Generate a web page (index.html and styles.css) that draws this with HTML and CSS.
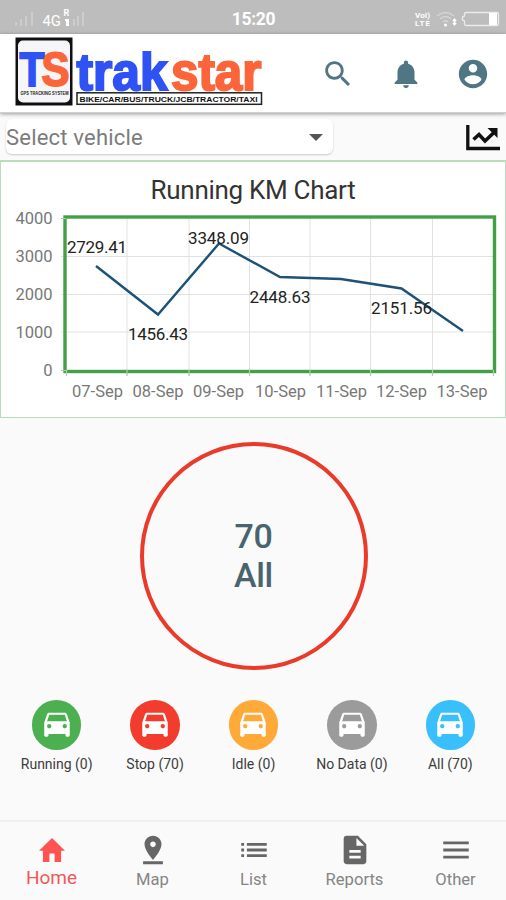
FILE: index.html
```html
<!DOCTYPE html>
<html lang="en">
<head>
<meta charset="utf-8">
<title>Trakstar</title>
<link rel="stylesheet" href="styles.css">
</head>
<body>
<div class="app">
  <div class="status">
    <svg class="status-left" viewBox="0 0 100 34">
      <g fill="#cdcdcd"><path d="M15 21h2v4h-2zM20 18h2v7h-2zM25 15h2v10h-2zM31 11h2v14h-2zM73 18h2v7h-2zM77 15h2v10h-2zM82 11h2v14h-2z"/></g>
      <text class="net" x="42.500" y="25" textLength="18.500" lengthAdjust="spacingAndGlyphs">4G</text>
      <text class="roam" x="63.500" y="15">R</text>
      <path d="M65 18h4v7h-3v-5h-1z" fill="#fff"/>
    </svg>
    <span class="clock">15:20</span>
    <svg class="status-right" viewBox="406 0 100 34">
      <text class="lte" x="415" y="17" textLength="15" lengthAdjust="spacingAndGlyphs">VoI)</text>
      <text class="lte" x="415" y="25" textLength="15">LTE</text>
      <g fill="none" stroke="#d6d6d6" stroke-width="1.300"><path d="M437 15q8.500-7 17 0M440 18q5.500-5 11 0M443 21q2.500-2.500 5 0"/></g>
      <circle cx="445.500" cy="24" r="1.500" fill="#fff"/>
      <path d="M454.500 17l2.300 3h-1.300v2h1.300l-2.300 3-2.300-3h1.300v-2h-1.300z" fill="#fff"/>
      <path d="M466 11.500h31a1.500 1.500 0 0 1 1.500 1.500v10a1.500 1.500 0 0 1-1.500 1.500h-31a1.500 1.500 0 0 1-1.500-1.500v-3l-2-1v-3l2-1v-2a1.500 1.500 0 0 1 1.500-1.500z" fill="none" stroke="#ececec" stroke-width="1.300"/>
      <path d="M489 12h8v12h-8z" fill="#fff"/>
    </svg>
  </div>

  <header class="header">
    <svg class="logo" viewBox="14 34 250 79">
      <rect x="15.500" y="37.500" width="57" height="68" fill="#101010"/>
      <rect x="18" y="40.500" width="52" height="62" rx="5" fill="#f6f6f8"/>
      <text class="mark blue" x="19.500" y="86" textLength="25" lengthAdjust="spacingAndGlyphs">T</text>
      <text class="mark orange" x="41.500" y="86" textLength="28" lengthAdjust="spacingAndGlyphs">S</text>
      <text class="micro" x="20.500" y="95" textLength="48" lengthAdjust="spacingAndGlyphs">GPS TRACKING SYSTEM</text>
      <text class="word blue" x="76.500" y="89.500" textLength="91" lengthAdjust="spacingAndGlyphs">trak</text>
      <text class="word orange" x="171" y="89.500" textLength="90.500" lengthAdjust="spacingAndGlyphs">star</text>
      <rect x="77" y="92.800" width="184.500" height="11.500" fill="#fff" stroke="#222" stroke-width="1.500"/>
      <text class="tag" x="79.500" y="102" textLength="178" lengthAdjust="spacingAndGlyphs">BIKE/CAR/BUS/TRUCK/JCB/TRACTOR/TAXI</text>
    </svg>
    <nav class="actions">
      <svg class="icon" viewBox="0 0 24 24"><path d="M15.500 14h-.79l-.28-.27C15.410 12.590 16 11.110 16 9.500 16 5.910 13.090 3 9.500 3S3 5.910 3 9.500 5.910 16 9.500 16c1.610 0 3.090-.59 4.230-1.570l.27.28v.79l5 4.990L20.490 19l-4.990-5zm-6 0C7.010 14 5 11.990 5 9.500S7.010 5 9.500 5 14 7.010 14 9.500 11.990 14 9.500 14z"/></svg>
      <svg class="icon" viewBox="0 0 24 24"><path d="M12 22c1.100 0 2-.9 2-2h-4c0 1.100.89 2 2 2zm6-6v-5c0-3.070-1.640-5.640-4.500-6.320V4c0-.83-.67-1.500-1.500-1.500s-1.500.67-1.500 1.500v.68C7.630 5.360 6 7.920 6 11v5l-2 2v1h16v-1l-2-2z"/></svg>
      <svg class="icon" viewBox="0 0 24 24"><path d="M12 2C6.480 2 2 6.480 2 12s4.480 10 10 10 10-4.480 10-10S17.520 2 12 2zm0 3c1.660 0 3 1.340 3 3s-1.340 3-3 3-3-1.340-3-3 1.340-3 3-3zm0 14.200c-2.500 0-4.710-1.280-6-3.220.03-1.990 4-3.080 6-3.080 1.990 0 5.970 1.090 6 3.080-1.290 1.940-3.500 3.220-6 3.220z"/></svg>
    </nav>
  </header>

  <div class="filter">
    <div class="select"><span>Select vehicle</span><i class="caret"></i></div>
    <svg class="trend" viewBox="0 0 34 27"><path d="M1.800 0v23.500H34" fill="none" stroke="#111" stroke-width="3.300"/><path d="M7.500 14.500l5.500-5 6 6.500 9-8.500" fill="none" stroke="#111" stroke-width="3.600"/><path d="M21.500 3h10v10z" fill="#111"/></svg>
  </div>

  <section class="chart">
    <h1 class="chart-title"><span>Running KM Chart</span></h1>
    <svg class="plot" viewBox="1 203 504 214">
      <path class="grid" d="M127 218v158M189 218v158M249.500 218v158M310 218v158M370.500 218v158M432.500 218v158M61 256.500h433M61 294.500h433M61 332h433"/>
      <rect x="65" y="217" width="429.500" height="154.500" fill="none" stroke="#43a047" stroke-width="3.400"/>
      <path class="tick" d="M61 218.500h5M61 370.500h5M66.500 370v6M127 370v6M189 370v6M249.500 370v6M310 370v6M370.500 370v6M432.500 370v6M493.500 370v6"/>
      <g class="axis end">
        <text x="52.500" y="224">4000</text><text x="52.500" y="262">3000</text><text x="52.500" y="300">2000</text><text x="52.500" y="338">1000</text><text x="52.500" y="376">0</text>
      </g>
      <g class="axis mid">
        <text x="97.500" y="397">07-Sep</text><text x="158" y="397">08-Sep</text><text x="218.500" y="397">09-Sep</text><text x="280.500" y="397">10-Sep</text><text x="341.500" y="397">11-Sep</text><text x="401.500" y="397">12-Sep</text><text x="462" y="397">13-Sep</text>
      </g>
      <polyline points="96,266 158,314.500 219,243.500 280,277 341,279 401.500,288.500 463,331" fill="none" stroke="#1b5276" stroke-width="2.400"/>
      <g class="value">
        <text x="67" y="253" textLength="60">2729.41</text><text x="128" y="340" textLength="60">1456.43</text><text x="188" y="243.500" textLength="61">3348.09</text><text x="249.500" y="303" textLength="61">2448.63</text><text x="371" y="314" textLength="61">2151.56</text>
      </g>
    </svg>
  </section>

  <main class="summary">
    <div class="gauge"><span>70</span><span>All</span></div>
    <div class="states">
      <div class="state"><div class="dot green"><svg class="icon car" viewBox="0 0 24 24"><use href="#car"/></svg></div><span>Running (0)</span></div>
      <div class="state"><div class="dot red"><svg class="icon car" viewBox="0 0 24 24"><use href="#car"/></svg></div><span>Stop (70)</span></div>
      <div class="state"><div class="dot amber"><svg class="icon car" viewBox="0 0 24 24"><use href="#car"/></svg></div><span>Idle (0)</span></div>
      <div class="state"><div class="dot gray"><svg class="icon car" viewBox="0 0 24 24"><use href="#car"/></svg></div><span>No Data (0)</span></div>
      <div class="state"><div class="dot sky"><svg class="icon car" viewBox="0 0 24 24"><use href="#car"/></svg></div><span>All (70)</span></div>
    </div>
  </main>

  <nav class="tabs">
    <div class="tab active"><div class="tab-icon"><svg class="home" viewBox="2 3 20 17" preserveAspectRatio="none"><path d="M10 20v-6h4v6h5v-8h3L12 3 2 12h3v8z"/></svg></div><span>Home</span></div>
    <div class="tab"><div class="tab-icon"><svg class="icon" viewBox="0 0 24 24"><path d="M18 8c0-3.310-2.690-6-6-6S6 4.690 6 8c0 4.500 6 11 6 11s6-6.500 6-11zm-8 0c0-1.100.9-2 2-2s2 .9 2 2-.89 2-2 2c-1.100 0-2-.9-2-2zM5 20v2h14v-2H5z"/></svg></div><span>Map</span></div>
    <div class="tab"><div class="tab-icon"><svg class="icon" viewBox="0 0 24 24"><path d="M3 13h2v-2H3v2zm0 4h2v-2H3v2zm0-8h2V7H3v2zm4 4h14v-2H7v2zm0 4h14v-2H7v2zM7 7v2h14V7H7z"/></svg></div><span>List</span></div>
    <div class="tab"><div class="tab-icon"><svg class="icon" viewBox="0 0 24 24"><path d="M14 2H6c-1.100 0-1.990.9-1.990 2L4 20c0 1.100.89 2 1.990 2H18c1.100 0 2-.9 2-2V8l-6-6zm2 16H8v-2h8v2zm0-4H8v-2h8v2zm-3-5V3.500L18.500 9H13z"/></svg></div><span>Reports</span></div>
    <div class="tab"><div class="tab-icon"><svg class="icon" viewBox="0 0 24 24"><path d="M3 18h18v-2H3v2zm0-5h18v-2H3v2zm0-7v2h18V6H3z"/></svg></div><span>Other</span></div>
  </nav>
</div>
<svg class="defs" width="0" height="0"><defs><path id="car" d="M18.920 5.010C18.720 4.420 18.160 4 17.500 4h-11c-.66 0-1.210.42-1.420 1.010L3 11v9c0 .55.45 1 1 1h1c.55 0 1-.45 1-1v-1h12v1c0 .55.45 1 1 1h1c.55 0 1-.45 1-1v-9l-2.080-5.990zM6.500 15c-.83 0-1.500-.67-1.500-1.500S5.670 12 6.500 12s1.500.67 1.500 1.500S7.330 15 6.500 15zm11 0c-.83 0-1.500-.67-1.500-1.500s.67-1.500 1.500-1.500 1.500.67 1.500 1.500-.67 1.500-1.500 1.500zM5 10l1.500-4.500h11L19 10H5z"/></defs></svg>
</body>
</html>
```
FILE: styles.css
```css
* { box-sizing: border-box; }
body { margin: 0; font-family: Roboto, "Liberation Sans", sans-serif; }
.app { width: 506px; height: 900px; display: flex; flex-direction: column; background: #fafafa; overflow: hidden; }
.defs { display: none; }
.icon { width: 34px; height: 34px; fill: currentColor; display: block; }

.status { height: 34px; flex: none; background: #bdbdbd; display: grid; grid-template-columns: 100px 1fr 100px; align-items: center; color: #fff; }
.status svg { width: 100px; height: 34px; display: block; }
.clock { text-align: center; font-size: 17.5px; font-weight: 700; line-height: 34px; padding: 2px 0 0 1px; letter-spacing: -0.3px; }
.net { font-size: 15.5px; fill: #fff; }
.roam { font-size: 9px; font-weight: 700; fill: #fff; }
.lte { font-size: 8px; font-weight: 700; fill: #fff; }

.header { height: 79px; flex: none; background: #fff; display: flex; align-items: center; justify-content: space-between; padding: 0 16px 0 14px; border-bottom: 1px solid #d0d0d0; box-shadow: 0 1px 4px rgba(0, 0, 0, .4); z-index: 1; }
.logo { width: 250px; height: 79px; display: block; overflow: visible; }
.mark { font: 700 48px "Liberation Sans", sans-serif; stroke-width: 1.8; }
.word { font: 700 51px "Liberation Sans", sans-serif; stroke-width: 2; }
.blue { fill: #2f52f5; stroke: #2f52f5; }
.orange { fill: #fc653a; stroke: #fc653a; }
.micro { font: 700 4.5px "Liberation Sans", sans-serif; fill: #222; }
.tag { font: 700 8px "Liberation Sans", sans-serif; fill: #111; }
.actions { display: flex; gap: 33.5px; color: #507583; padding-top: 1px; }

.filter { height: 47px; flex: none; display: flex; justify-content: space-between; align-items: flex-start; padding: 6px 6px 0 6px; }
.select { width: 327px; height: 35px; background: #fff; border-radius: 6px; box-shadow: 0 1px 2px rgba(0, 0, 0, .2); display: flex; align-items: center; justify-content: space-between; padding: 1px 10px 0 0; font-size: 22px; letter-spacing: .2px; color: #7c7c7c; }
.caret { border: 7px solid transparent; border-top-color: #555; border-bottom: 0; }
.trend { width: 34px; height: 27px; margin-top: 6px; overflow: visible; }

.chart { height: 258px; flex: none; background: #fff; border: 1px solid #b9dcbb; border-top-width: 2px; display: flex; flex-direction: column; }
.chart-title { margin: 0; height: 41px; font-size: 26px; font-weight: 400; line-height: 56px; letter-spacing: -0.3px; text-align: center; color: #333; }
.plot { width: 504px; height: 214px; display: block; }
.grid { stroke: #e2e2e2; stroke-width: 1; fill: none; }
.tick { stroke: #b5c9b5; stroke-width: 1.2; fill: none; }
.axis { font-size: 16.5px; fill: #777; }
.end { text-anchor: end; }
.mid { text-anchor: middle; }
.value { font-size: 17px; fill: #222; }

.summary { flex: 1; display: flex; flex-direction: column; align-items: center; padding: 24px 0 0 1px; }
.gauge { width: 228px; height: 228px; border: 4px solid #e93a2a; border-radius: 50%; display: flex; flex-direction: column; align-items: center; justify-content: center; font-size: 34px; font-weight: 500; line-height: 39px; letter-spacing: -0.3px; color: #49636f; }
.states { width: 492px; margin-top: 30px; display: grid; grid-template-columns: repeat(5, 1fr); }
.state { display: flex; flex-direction: column; align-items: center; font-size: 14px; line-height: 18px; color: #3d3d3d; gap: 5px; white-space: nowrap; }
.dot { width: 49.5px; height: 49.5px; border-radius: 50%; color: #fff; display: flex; align-items: center; justify-content: center; padding-bottom: 2px; }
.green { background: #4caf50; }
.red { background: #f23c2e; }
.amber { background: #ffa938; }
.gray { background: #9b9b9b; }
.sky { background: #38bffc; }

.tabs { height: 80px; flex: none; border-top: 2px solid #f0f0f0; display: grid; grid-template-columns: repeat(5, 1fr); padding-left: 1px; }
.tab { display: flex; flex-direction: column; align-items: center; padding-top: 11px; color: #666; font-size: 16.6px; line-height: 24px; }
.tab-icon { height: 34px; display: flex; align-items: center; }
.tab span { margin-top: 1px; color: #858585; }
.home { width: 26px; height: 24px; fill: #ff5252; }
.tab.active span { color: #f25757; font-size: 19px; margin-top: -1px; }
```
